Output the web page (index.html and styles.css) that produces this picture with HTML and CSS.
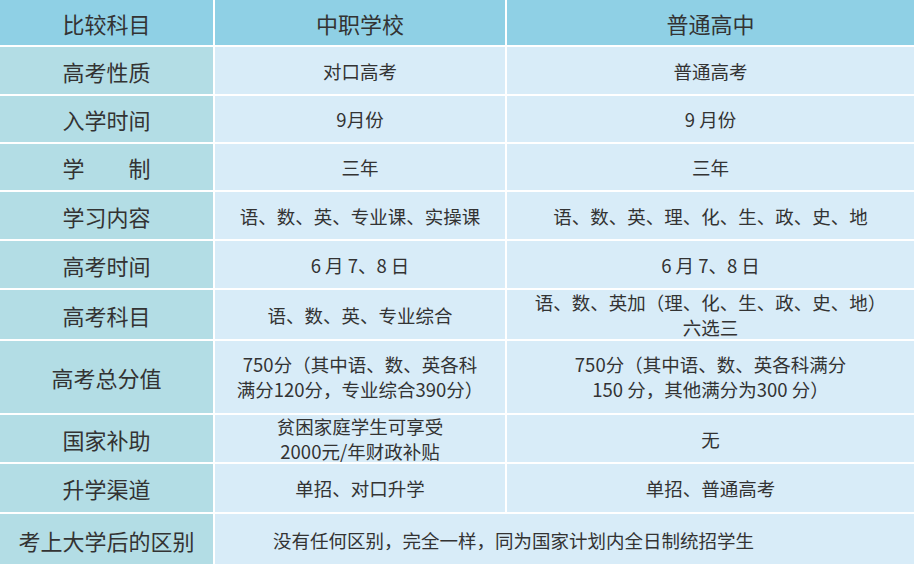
FILE: index.html
```html
<!DOCTYPE html>
<html lang="zh">
<head>
<meta charset="utf-8">
<link rel="stylesheet" href="styles.css">
</head>
<body>
<div class="table">
  <div class="cell head">比较科目</div>
  <div class="cell head">中职学校</div>
  <div class="cell head">普通高中</div>

  <div class="cell label r1">高考性质</div>
  <div class="cell body">对口高考</div>
  <div class="cell body">普通高考</div>

  <div class="cell label r2">入学时间</div>
  <div class="cell body">9月份</div>
  <div class="cell body">9 月份</div>

  <div class="cell label r3">学&emsp;&emsp;制</div>
  <div class="cell body">三年</div>
  <div class="cell body">三年</div>

  <div class="cell label r4">学习内容</div>
  <div class="cell body">语、数、英、专业课、实操课</div>
  <div class="cell body">语、数、英、理、化、生、政、史、地</div>

  <div class="cell label r5">高考时间</div>
  <div class="cell body">6 月 7、8 日</div>
  <div class="cell body">6 月 7、8 日</div>

  <div class="cell label r6">高考科目</div>
  <div class="cell body">语、数、英、专业综合</div>
  <div class="cell body two">语、数、英加（理、化、生、政、史、地）<br>六选三</div>

  <div class="cell label r7">高考总分值</div>
  <div class="cell body two">750分（其中语、数、英各科<br>满分120分，专业综合390分）</div>
  <div class="cell body two">750分（其中语、数、英各科满分<br>150 分，其他满分为300 分）</div>

  <div class="cell label r8">国家补助</div>
  <div class="cell body two">贫困家庭学生可享受<br>2000元/年财政补贴</div>
  <div class="cell body">无</div>

  <div class="cell label r9">升学渠道</div>
  <div class="cell body">单招、对口升学</div>
  <div class="cell body">单招、普通高考</div>

  <div class="cell label r10">考上大学后的区别</div>
  <div class="cell body wide">没有任何区别，完全一样，同为国家计划内全日制统招学生</div>
</div>
</body>
</html>
```
FILE: styles.css
```css
html, body {
  margin: 0;
  padding: 0;
  background: #ffffff;
}
body {
  width: 916px;
  height: 564px;
  overflow: hidden;
  font-family: "Noto Sans CJK SC", "Noto Sans", sans-serif;
  color: #333333;
}
.table {
  display: grid;
  grid-template-columns: 213px 290px 407px;
  grid-template-rows: 45px 47px 46px 46px 47px 47px 49px 72px 47px 48px 51px;
  column-gap: 2px;
  row-gap: 2px;
  width: 914px;
  background: #ffffff;
}
.cell {
  display: flex;
  align-items: center;
  justify-content: center;
  text-align: center;
  white-space: nowrap;
}
.head {
  background: #8fd0e5;
  font-size: 22px;
}
.label {
  background: #b3dde5;
  font-size: 22px;
}
.body {
  background: #d8ecf8;
  font-size: 18.5px;
}
.two {
  line-height: 25px;
}
.wide {
  grid-column: 2 / span 2;
  justify-content: flex-start;
  padding-left: 58px;
}
```
